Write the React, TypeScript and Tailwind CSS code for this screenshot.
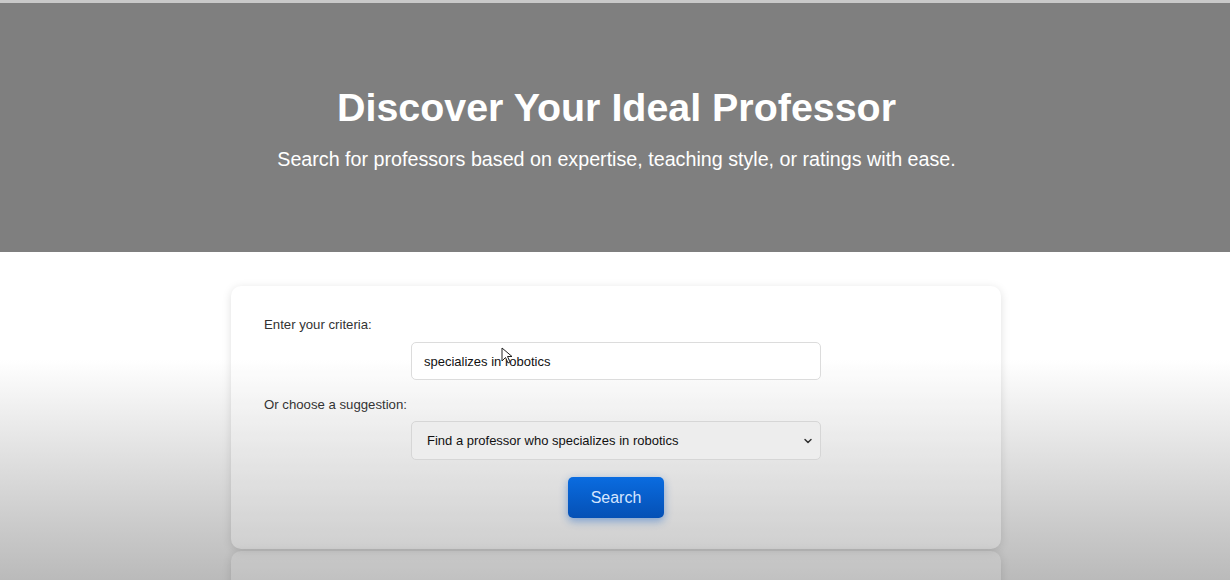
import { ChevronDown } from "lucide-react";

function Cursor() {
  return (
    <svg
      className="pointer-events-none absolute left-[90px] top-[5px]"
      width="12"
      height="18"
      viewBox="0 0 12 18"
    >
      <path d="M1 1 L1 14 L4.5 10.5 L7 16 L9 15 L6.5 9.5 L11 9.5 Z" fill="#fff" stroke="#222" strokeWidth="1" />
    </svg>
  );
}

export default function App() {
  return (
    <div className="h-[580px] w-[1230px] overflow-hidden bg-gradient-to-b from-white from-[62%] to-[#bababa] font-['Liberation_Sans',Arial,sans-serif]">
      <div className="h-[3px] bg-[#c9c9c9]" />
      <header className="flex h-[249px] flex-col items-center justify-center bg-[#7f7f7f] pl-[3px] text-white">
        <h1 className="mt-[2px] text-[39.4px] font-bold leading-tight">Discover Your Ideal Professor</h1>
        <p className="mt-[13px] text-[19.7px]">
          Search for professors based on expertise, teaching style, or ratings with ease.
        </p>
      </header>

      <main className="flex flex-col items-center pl-[2px] pt-[34px]">
        <section className="w-[770px] rounded-[10px] bg-white/20 px-[33px] pb-[31px] pt-[31px] shadow-[0_2px_10px_rgba(0,0,0,0.13)]">
          <label className="block text-[13.2px] leading-4 text-[#333]">Enter your criteria:</label>
          <div className="relative mx-auto mt-[9px] w-[410px]">
            <input
              readOnly
              value="specializes in robotics"
              className="h-[38px] w-full rounded-[5px] border border-[#dcdcdc] bg-white px-3 text-[13px] text-[#111] outline-none"
            />
            <Cursor />
          </div>

          <label className="mt-[17px] block text-[13.2px] leading-4 text-[#333]">Or choose a suggestion:</label>
          <div className="mx-auto mt-[8px] flex h-[39px] w-[410px] items-center justify-between rounded-[5px] border border-[#d6d6d6] bg-[#ededed] pl-[15px] pr-[6px] text-[13px] text-[#111]">
            <span>Find a professor who specializes in robotics</span>
            <ChevronDown size={12} strokeWidth={3} className="text-[#333]" />
          </div>

          <div className="mt-[17px] flex justify-center">
            <button className="h-[41px] w-[96px] rounded-[5px] bg-gradient-to-b from-[#0a6ce0] to-[#0550b5] text-[16px] text-[#d6e6ff] shadow-[0_3px_8px_rgba(10,90,200,0.45)]">
              Search
            </button>
          </div>
        </section>
        <section className="mt-[2px] h-[40px] w-[770px] rounded-[10px] bg-white/10 shadow-[0_2px_10px_rgba(0,0,0,0.13)]" />
      </main>
    </div>
  );
}
